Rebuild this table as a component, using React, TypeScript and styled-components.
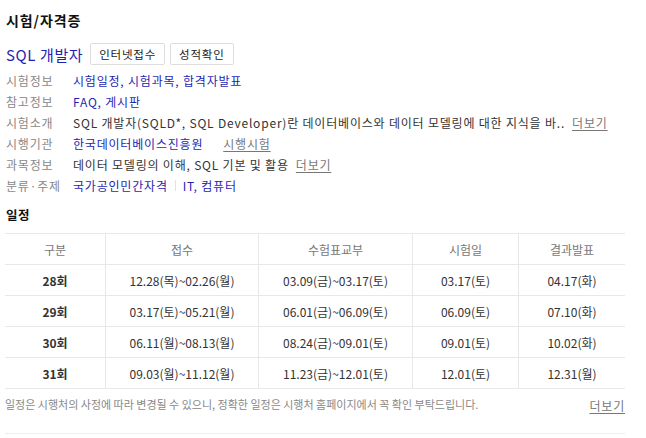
import React from "react";
import styled, { createGlobalStyle } from "styled-components";

const blue = "#1f1fb4";
const gray = "#888";
const line = "#e8e8e8";

const GlobalStyle = createGlobalStyle`
  body {
    margin: 0;
    background: #fff;
    font-family: "Noto Sans CJK KR", "Noto Sans", "Liberation Sans", sans-serif;
    color: #333;
  }
`;

const Page = styled.div`
  width: 620px;
  padding: 10px 0 0 5px;
`;

const Title = styled.h2`
  margin: 0;
  font-size: 14px;
  font-weight: 700;
  line-height: 20px;
  color: #111;
  padding-left: 1px;
  letter-spacing: 0.9px;
`;

const HeadRow = styled.div`
  display: flex;
  align-items: center;
  gap: 5px;
  height: 22px;
  margin-top: 13px;
  padding-left: 1px;
`;

const Name = styled.a`
  font-size: 15px;
  color: ${blue};
  text-decoration: none;
  margin-right: 2px;
  letter-spacing: 0.6px;
`;

const Btn = styled.button`
  height: 22px;
  padding: 0 8px;
  border: 1px solid #ddd;
  border-radius: 2px;
  background: #fff;
  font-family: inherit;
  font-size: 11.5px;
  color: #222;
  line-height: 20px;
  letter-spacing: 0.8px;
`;

const InfoList = styled.dl`
  margin: 5px 0 0;
  padding-left: 1px;
`;

const InfoRow = styled.div`
  display: flex;
  align-items: center;
  height: 21px;
  font-size: 12px;
  letter-spacing: 0.8px;
`;

const Label = styled.dt`
  width: 67px;
  color: ${gray};
  flex-shrink: 0;
`;

const Value = styled.dd`
  margin: 0;
  display: flex;
  align-items: center;
  white-space: nowrap;
  color: #333;
`;

const Link = styled.a`
  color: ${blue};
  text-decoration: none;
`;

const More = styled.a<{ $gap?: number }>`
  color: #777;
  text-decoration: underline;
  text-underline-offset: 2px;
  margin-left: ${(p) => p.$gap ?? 7}px;
`;

const Divider = styled.span`
  display: inline-block;
  width: 1px;
  height: 11px;
  background: #e2e2e2;
  margin: 0 7px;
`;

const SubTitle = styled.h3`
  margin: 9px 0 0;
  font-size: 12.5px;
  font-weight: 700;
  line-height: 20px;
  color: #111;
  padding-left: 1px;
  letter-spacing: 0.5px;
`;

const Table = styled.table`
  margin-top: 8px;
  width: 620px;
  border-collapse: collapse;
  table-layout: fixed;
  font-size: 12px;
  border-top: 1px solid ${line};
`;

const Th = styled.th<{ $w: number }>`
  width: ${(p) => p.$w}px;
  height: 30px;
  padding: 0;
  font-weight: 400;
  color: #777;
  border-bottom: 1px solid ${line};
  & + & {
    border-left: 1px solid ${line};
  }
`;

const Td = styled.td<{ $bold?: boolean }>`
  height: 30px;
  padding: 0;
  text-align: center;
  color: #333;
  font-weight: ${(p) => (p.$bold ? 700 : 400)};
  border-bottom: 1px solid ${line};
  & + & {
    border-left: 1px solid ${line};
  }
`;

const NoteRow = styled.div`
  display: flex;
  align-items: center;
  justify-content: space-between;
  width: 620px;
  height: 29px;
  font-size: 11px;
  color: ${gray};
  border-bottom: 1px solid #eee;
  padding-bottom: 15px;
`;

const NoteMore = styled.a`
  font-size: 12px;
  color: #777;
  text-decoration: underline;
  text-underline-offset: 2px;
  margin-top: 4px;
  letter-spacing: 0.8px;
`;

const columns = [
  { title: "구분", w: 100 },
  { title: "접수", w: 152 },
  { title: "수험표교부", w: 153 },
  { title: "시험일", w: 105 },
  { title: "결과발표", w: 106 },
];

const schedule = [
  ["28회", "12.28(목)~02.26(월)", "03.09(금)~03.17(토)", "03.17(토)", "04.17(화)"],
  ["29회", "03.17(토)~05.21(월)", "06.01(금)~06.09(토)", "06.09(토)", "07.10(화)"],
  ["30회", "06.11(월)~08.13(월)", "08.24(금)~09.01(토)", "09.01(토)", "10.02(화)"],
  ["31회", "09.03(월)~11.12(월)", "11.23(금)~12.01(토)", "12.01(토)", "12.31(월)"],
];

export default function App() {
  return (
    <>
      <GlobalStyle />
      <Page>
        <Title>시험/자격증</Title>
        <HeadRow>
          <Name href="#">SQL 개발자</Name>
          <Btn>인터넷접수</Btn>
          <Btn>성적확인</Btn>
        </HeadRow>
        <InfoList>
          <InfoRow>
            <Label>시험정보</Label>
            <Value>
              <Link href="#">시험일정, 시험과목, 합격자발표</Link>
            </Value>
          </InfoRow>
          <InfoRow>
            <Label>참고정보</Label>
            <Value>
              <Link href="#">FAQ, 게시판</Link>
            </Value>
          </InfoRow>
          <InfoRow>
            <Label>시험소개</Label>
            <Value>
              SQL 개발자(SQLD*, SQL Developer)란 데이터베이스와 데이터 모델링에 대한 지식을 바..
              <More href="#" $gap={7}>더보기</More>
            </Value>
          </InfoRow>
          <InfoRow>
            <Label>시행기관</Label>
            <Value>
              <Link href="#">한국데이터베이스진흥원</Link>
              <More href="#" $gap={20}>시행시험</More>
            </Value>
          </InfoRow>
          <InfoRow>
            <Label>과목정보</Label>
            <Value>
              데이터 모델링의 이해, SQL 기본 및 활용
              <More href="#">더보기</More>
            </Value>
          </InfoRow>
          <InfoRow>
            <Label>분류·주제</Label>
            <Value>
              <Link href="#">국가공인민간자격</Link>
              <Divider />
              <Link href="#">IT, 컴퓨터</Link>
            </Value>
          </InfoRow>
        </InfoList>

        <SubTitle>일정</SubTitle>
        <Table>
          <thead>
            <tr>
              {columns.map((c) => (
                <Th key={c.title} $w={c.w}>
                  {c.title}
                </Th>
              ))}
            </tr>
          </thead>
          <tbody>
            {schedule.map((row) => (
              <tr key={row[0]}>
                {row.map((cell, i) => (
                  <Td key={i} $bold={i === 0}>
                    {cell}
                  </Td>
                ))}
              </tr>
            ))}
          </tbody>
        </Table>
        <NoteRow>
          <span>일정은 시행처의 사정에 따라 변경될 수 있으니, 정확한 일정은 시행처 홈페이지에서 꼭 확인 부탁드립니다.</span>
          <NoteMore href="#">더보기</NoteMore>
        </NoteRow>
      </Page>
    </>
  );
}
